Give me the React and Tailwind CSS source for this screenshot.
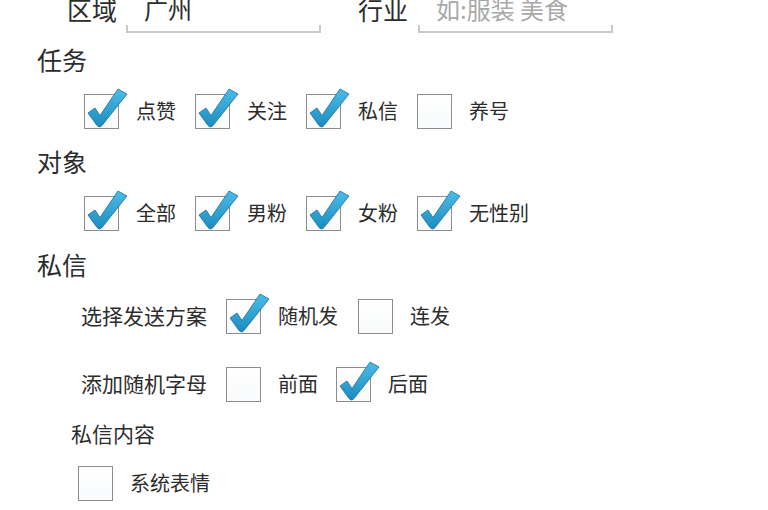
import React from 'react';

const Check = () => (
  <svg className="absolute left-[-2px] top-[-10px] w-[48px] h-[46px]" viewBox="-2 -10 48 46">
    <defs>
      <linearGradient id="tick" x1="0" y1="0" x2="0" y2="1">
        <stop offset="0" stopColor="#4cbce6" />
        <stop offset="1" stopColor="#1b8cc0" />
      </linearGradient>
    </defs>
    <path
      d="M3 18 L10 13 L15 20.5 L33 -6 L42 -1 L17 30.5 Q14.5 33.5 12 30.5 Z"
      fill="url(#tick)"
      stroke="#1a6f98"
      strokeWidth="0.8"
      strokeLinejoin="round"
    />
  </svg>
);

const Box = ({ checked }) => (
  <span className="relative inline-block shrink-0 w-[35px] h-[35px] border-[1.5px] border-[#8d8d8d] bg-gradient-to-b from-white to-[#f8fafb]">
    {checked && <Check />}
  </span>
);

const Option = ({ checked, label, width }) => (
  <div className={`flex items-center whitespace-nowrap ${width}`}>
    <Box checked={checked} />
    <span className="ml-[17px] text-[20px]">{label}</span>
  </div>
);

const Field = ({ value, placeholder }) => (
  <div className="relative w-[195px] h-[46px] border-b-2 border-[#c9c9c9] pl-[18px]">
    <span className="absolute left-0 bottom-0 w-[2px] h-[6px] bg-[#c9c9c9]" />
    <span className="absolute right-0 bottom-0 w-[2px] h-[6px] bg-[#c9c9c9]" />
    {value ? (
      <span className="block text-[24px] leading-[44px] -mt-[1px]">{value}</span>
    ) : (
      <span className="block text-[24px] leading-[44px] -mt-[1px] text-[#a9a9a9]">{placeholder}</span>
    )}
  </div>
);

const Heading = ({ children, h }) => (
  <div className={`flex items-center pl-[37px] text-[25px] ${h}`}>{children}</div>
);

export default function App() {
  return (
    <div className="w-[768px] h-[510px] overflow-hidden bg-white text-[#2c2c2c] font-['Noto_Sans_CJK_SC','Noto_Sans',sans-serif]">
      <div className="-mt-[12px] flex flex-col">
        {/* area / industry */}
        <div className="flex items-start h-[44px] pl-[67px]">
          <span className="text-[25px] leading-[44px] -mt-[1px]">区域</span>
          <div className="ml-[9px]">
            <Field value="广州" />
          </div>
          <span className="ml-[37px] text-[25px] leading-[44px] -mt-[1px]">行业</span>
          <div className="ml-[10px]">
            <Field placeholder="如:服装 美食" />
          </div>
        </div>

        <Heading h="h-[56px]">任务</Heading>
        <div className="flex items-center h-[46px] pl-[84px]">
          <Option checked label="点赞" width="w-[111px]" />
          <Option checked label="关注" width="w-[111px]" />
          <Option checked label="私信" width="w-[111px]" />
          <Option label="养号" width="w-[111px]" />
        </div>

        <Heading h="h-[56px]">对象</Heading>
        <div className="flex items-center h-[46px] pl-[84px]">
          <Option checked label="全部" width="w-[111px]" />
          <Option checked label="男粉" width="w-[111px]" />
          <Option checked label="女粉" width="w-[111px]" />
          <Option checked label="无性别" width="w-[130px]" />
        </div>

        <Heading h="h-[58px]">私信</Heading>
        <div className="flex items-center h-[44px] pl-[81px]">
          <span className="text-[21px] w-[145px]">选择发送方案</span>
          <Option checked label="随机发" width="w-[132px]" />
          <Option label="连发" width="w-[100px]" />
        </div>

        <div className="flex items-center h-[44px] mt-[24px] pl-[81px]">
          <span className="text-[21px] w-[145px]">添加随机字母</span>
          <Option label="前面" width="w-[110px]" />
          <Option checked label="后面" width="w-[100px]" />
        </div>

        <div className="flex items-center h-[56px] pl-[71px] text-[21px]">私信内容</div>
        <div className="flex items-center h-[42px] pl-[78px]">
          <Box />
          <span className="ml-[17px] text-[20px]">系统表情</span>
        </div>
      </div>
    </div>
  );
}
